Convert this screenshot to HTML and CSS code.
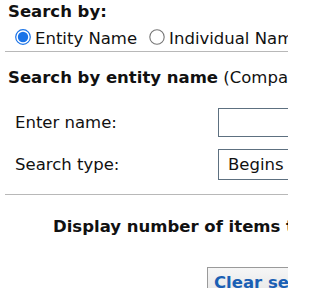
FILE: index.html
```html
<!DOCTYPE html>
<html>
<head>
<meta charset="utf-8">
<link rel="stylesheet" href="styles.css">
</head>
<body>
<div class="frame">
<div class="page">
  <div class="search-by">Search by:</div>
  <div class="radios">
    <label class="radio"><svg class="rb" viewBox="0 0 16 16" width="16" height="16"><circle cx="8" cy="8" r="7.3" fill="#fff" stroke="#1a73e8" stroke-width="1.2"/><circle cx="8" cy="8" r="5.2" fill="#1a73e8"/></svg><span>Entity Name</span></label>
    <label class="radio r2"><svg class="rb" viewBox="0 0 16 16" width="16" height="16"><circle cx="8" cy="8" r="7.2" fill="#fff" stroke="#767676" stroke-width="1.1"/></svg><span>Individual Name</span></label>
  </div>
  <div class="rule"></div>
  <div class="section-title"><b>Search by entity name</b> (Company, Partnership, Trust)</div>
  <div class="form">
    <div class="row">
      <span class="lbl">Enter name:</span>
      <span class="field name-field"></span>
    </div>
    <div class="row row2">
      <span class="lbl">Search type:</span>
      <span class="field select-field">Begins with</span>
    </div>
  </div>
  <div class="rule rule2"></div>
  <div class="display">Display number of items to view:</div>
  <div class="btns"><button class="clear">Clear search</button></div>
</div>
</div>
</body>
</html>
```
FILE: styles.css
```css
html, body {
  margin: 0;
  padding: 0;
  background: #fff;
}
body {
  font-family: "DejaVu Sans", Verdana, sans-serif;
  font-size: 16.5px;
  color: #111;
}
.frame {
  width: 288px;
  height: 288px;
  overflow: hidden;
}
.page {
  width: 600px;
}
.search-by {
  font-weight: bold;
  line-height: 20px;
  padding: 2px 0 0 8px;
}
.radios {
  display: flex;
  padding-left: 15px;
  margin-top: 7px;
  line-height: 20px;
}
.radio {
  display: flex;
  align-items: flex-start;
  white-space: nowrap;
}
.rb {
  display: block;
  margin-right: 4px;
  flex: none;
}
.r2 {
  margin-left: 12px;
}
.rule {
  margin: 2px 0 0 5px;
  height: 0;
  border-top: 1px solid #b8b8b8;
}
.section-title {
  white-space: nowrap;
  padding-left: 8px;
  line-height: 20px;
  margin-top: 16px;
}
.section-title b {
  font-weight: bold;
}
.form {
  padding-left: 15px;
  margin-top: 20px;
}
.row {
  display: flex;
  align-items: center;
  height: 29px;
}
.row2 {
  margin-top: 12px;
  height: 31px;
}
.lbl {
  width: 203px;
  flex: none;
  line-height: 20px;
}
.field {
  display: block;
  box-sizing: border-box;
  border: 1px solid #5d7080;
  width: 200px;
  height: 100%;
  line-height: 29px;
  padding-left: 9px;
  white-space: nowrap;
}
.rule2 {
  margin-top: 14px;
}
.display {
  font-weight: bold;
  white-space: nowrap;
  padding-left: 53px;
  margin-top: 22px;
  line-height: 20px;
}
.btns {
  padding-left: 207px;
  margin-top: 30px;
}
.clear {
  font-family: "DejaVu Sans", Verdana, sans-serif;
  font-size: 16.5px;
  font-weight: bold;
  color: #1a5fb4;
  background: linear-gradient(#f6f6f6, #e4e4e4);
  border: 1px solid #9a9a9a;
  padding: 5px 6px;
  line-height: 20px;
  white-space: nowrap;
}
```
